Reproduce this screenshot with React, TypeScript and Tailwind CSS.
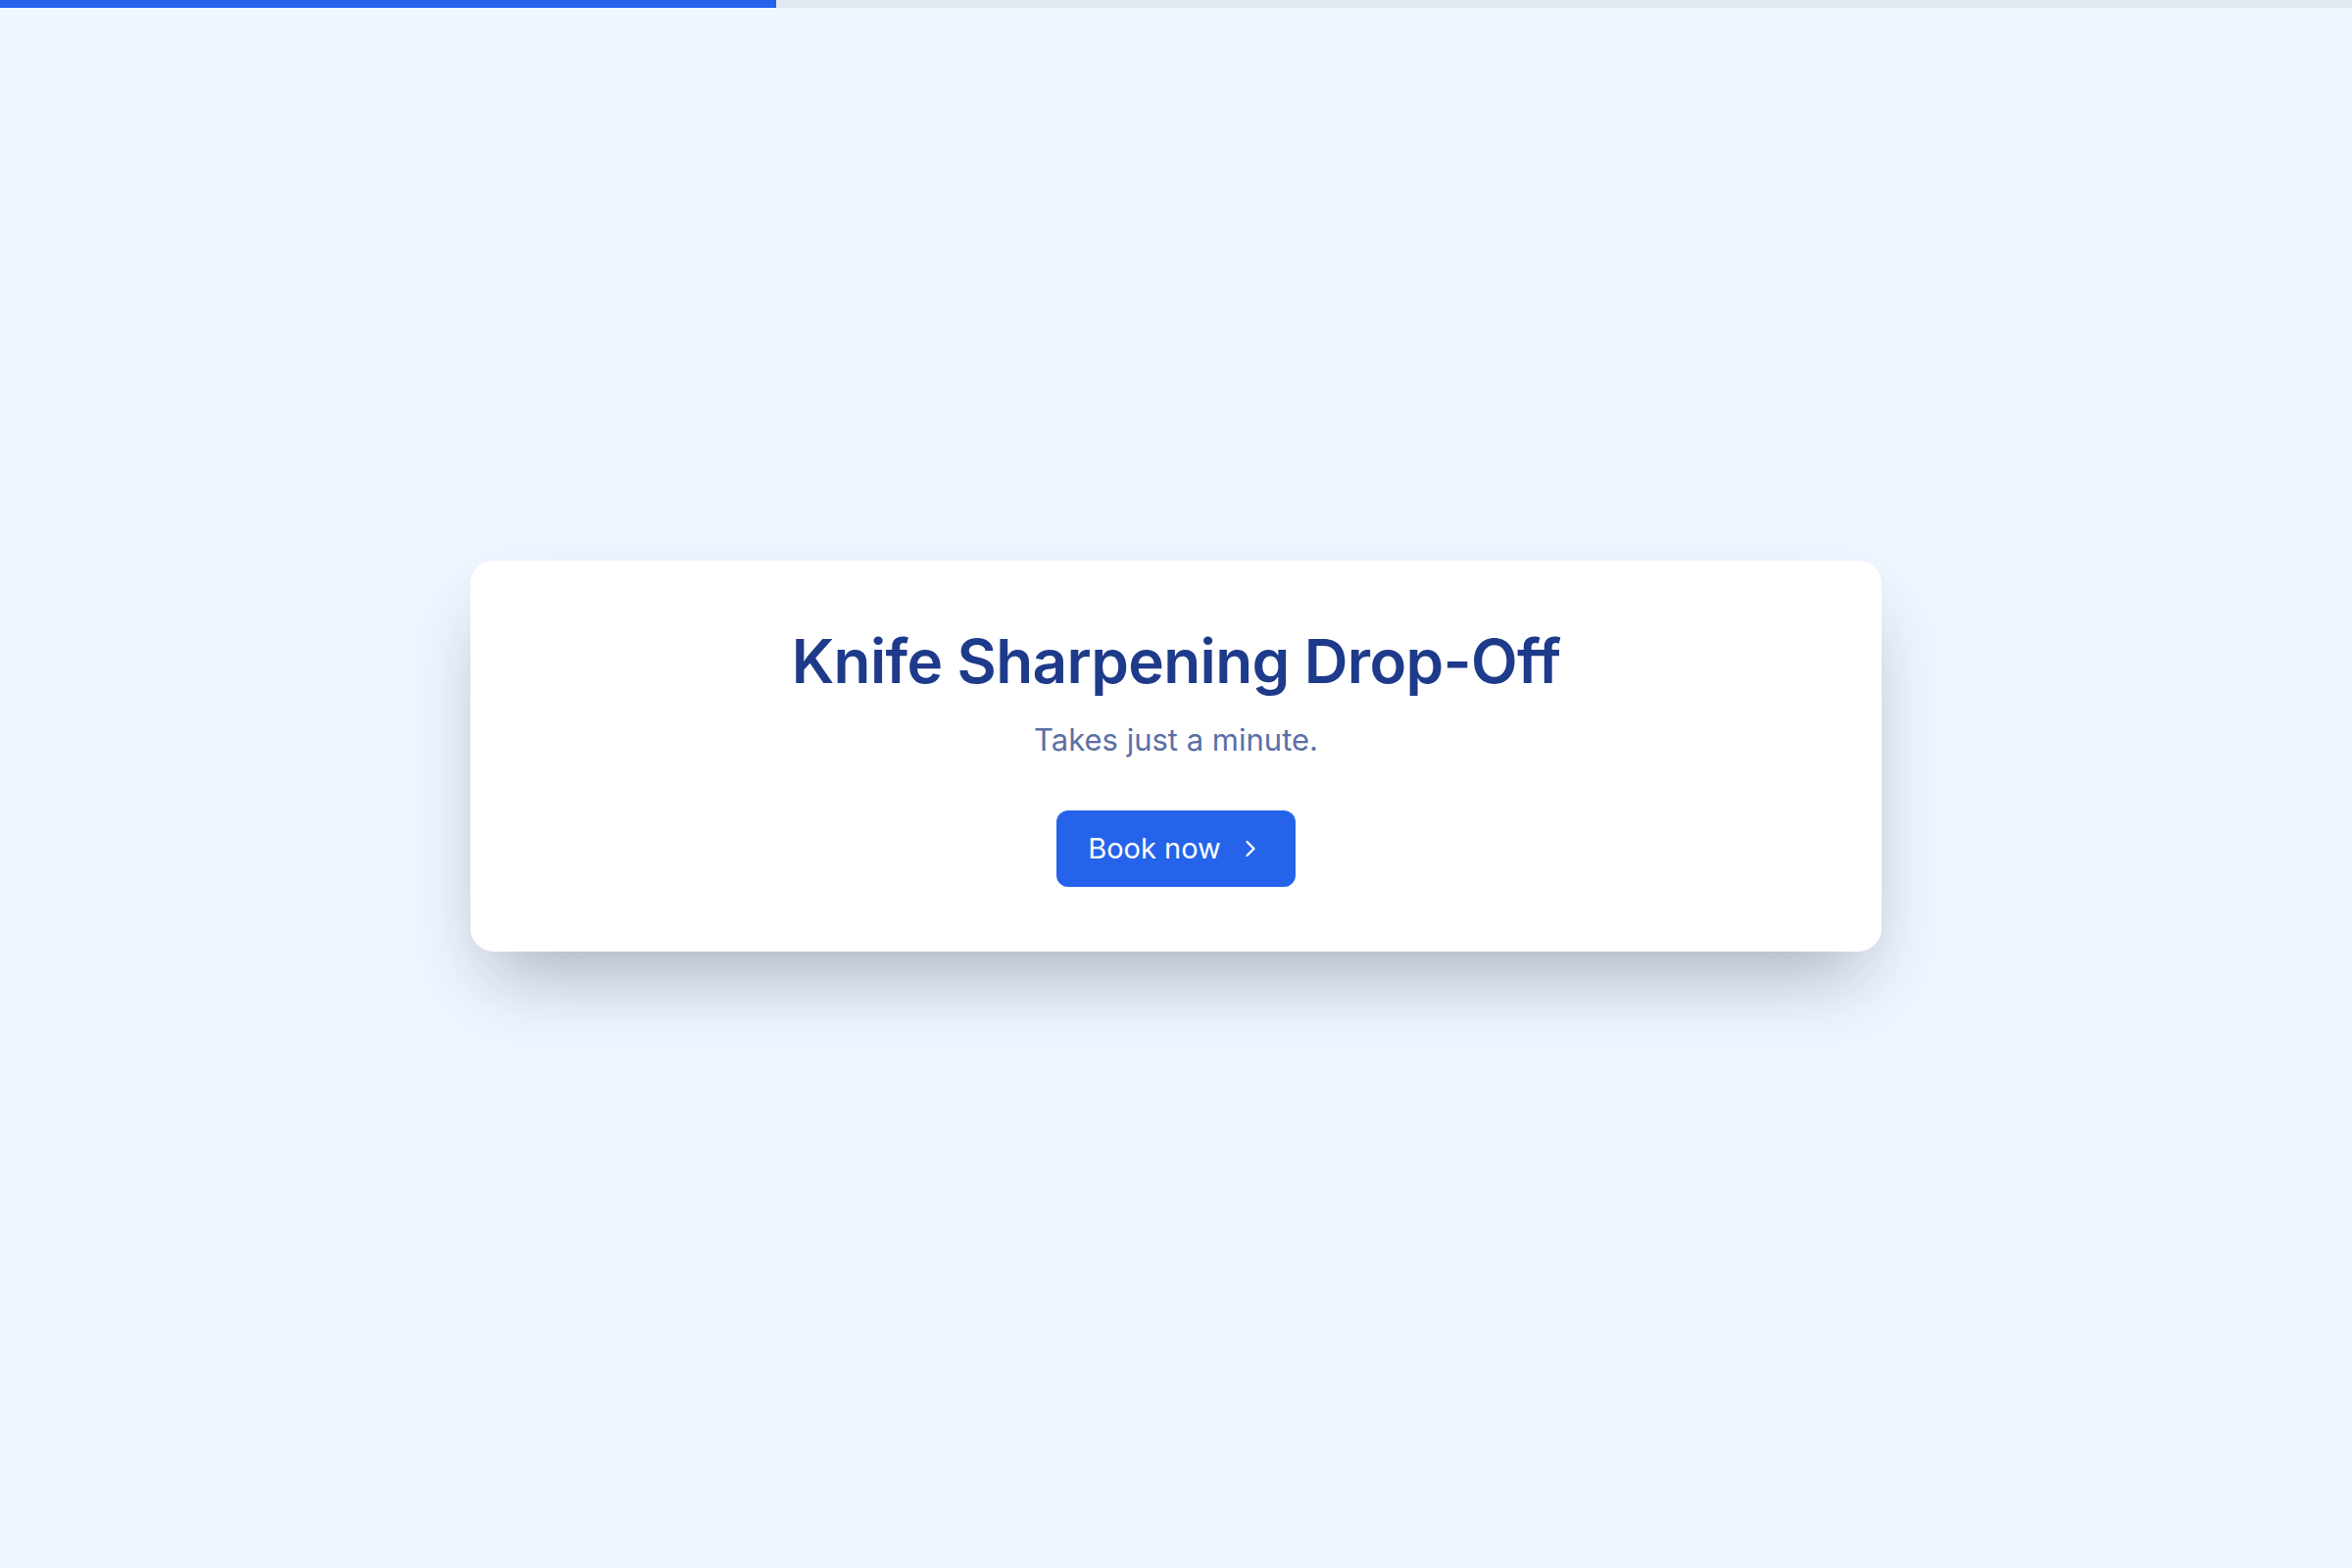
import React from "react";
import { ChevronRight } from "lucide-react";

export default function App() {
  return (
    <div
      className="min-h-screen flex flex-col bg-[#eff6ff]"
      style={{ fontFamily: "Inter, 'Noto Sans', sans-serif" }}
    >
      <div className="h-2 w-full bg-[#e2e8f0]">
        <div className="h-full w-[33%] bg-[#2563eb]" />
      </div>

      <div className="flex-1 flex items-center justify-center pb-[66px]">
        <div className="w-[1440px] bg-white rounded-3xl shadow-[0_40px_80px_-20px_rgba(30,41,59,0.35)] px-16 pt-[63px] pb-[66px] flex flex-col items-center">
          <h1 className="text-[62px] leading-[80px] font-semibold tracking-[-0.01em] text-[#1e3a8a]">
            Knife Sharpening Drop-Off
          </h1>
          <p className="mt-5 text-[31px] leading-[40px] text-[#5b6fa6]">
            Takes just a minute.
          </p>
          <button className="mt-[52px] h-[78px] px-8 rounded-xl bg-[#2563eb] text-white text-[29px] flex items-center gap-4">
            <span>Book now</span>
            <ChevronRight className="w-7 h-7" strokeWidth={2} />
          </button>
        </div>
      </div>
    </div>
  );
}
